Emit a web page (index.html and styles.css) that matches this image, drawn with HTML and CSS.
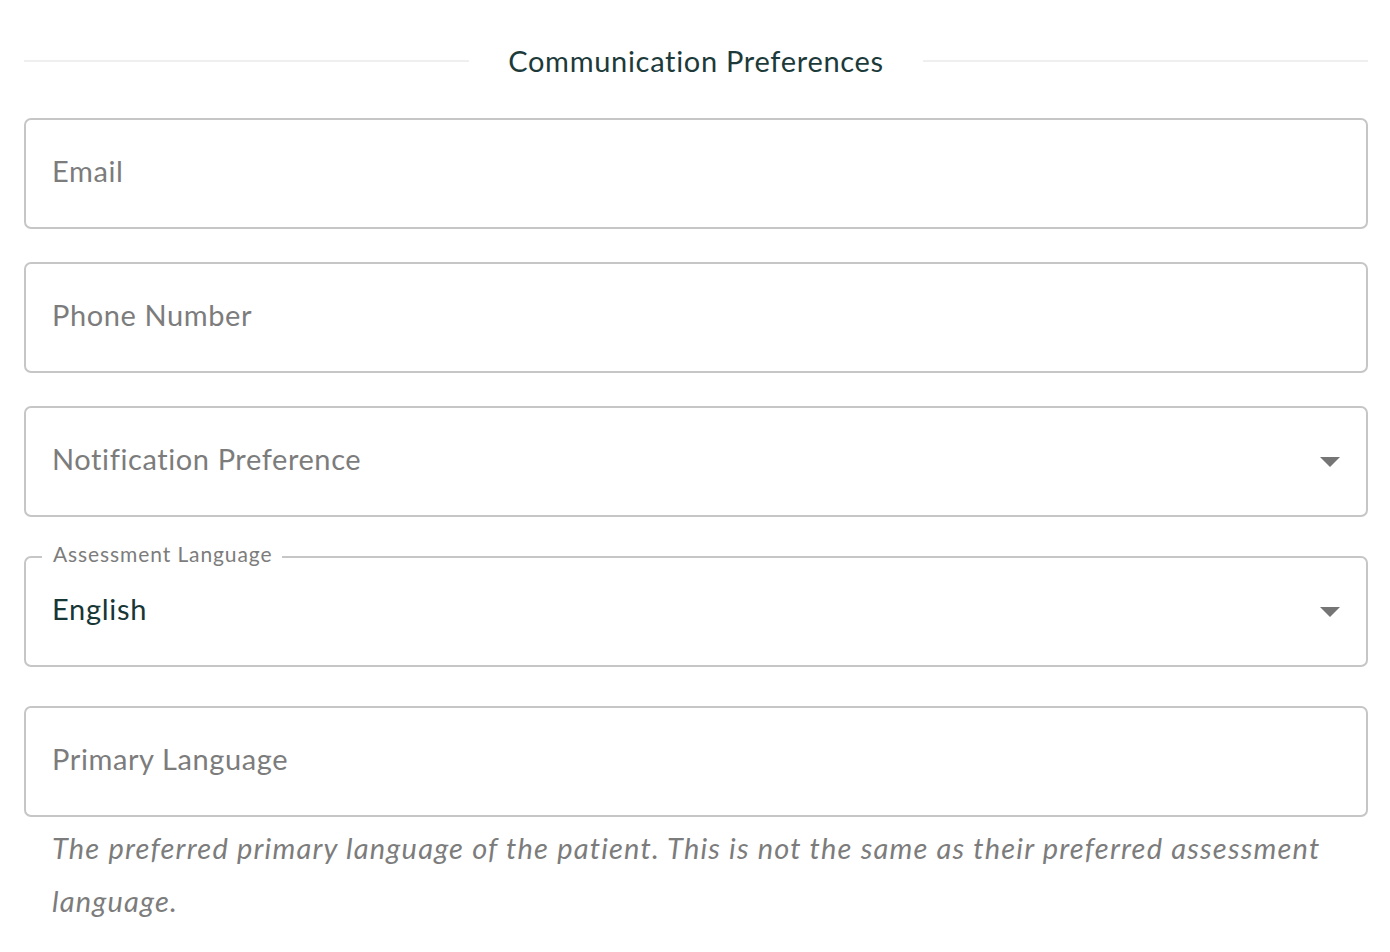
FILE: index.html
```html
<!DOCTYPE html>
<html lang="en">
<head>
<meta charset="utf-8">
<title>Communication Preferences</title>
<link rel="stylesheet" href="styles.css">
</head>
<body>
<main class="page">
  <div class="section-head">
    <span class="rule"></span>
    <h2 class="section-title">Communication Preferences</h2>
    <span class="rule"></span>
  </div>

  <div class="field">
    <div class="box"><span class="placeholder">Email</span></div>
  </div>

  <div class="field">
    <div class="box"><span class="placeholder">Phone Number</span></div>
  </div>

  <div class="field">
    <div class="box select">
      <span class="placeholder">Notification Preference</span>
      <svg class="caret" width="20" height="10" viewBox="0 0 20 10"><path d="M0 0 L20 0 L10 10 Z" fill="#757575"/></svg>
    </div>
  </div>

  <div class="field field-labeled">
    <div class="box select">
      <span class="float-label">Assessment Language</span>
      <span class="value">English</span>
      <svg class="caret" width="20" height="10" viewBox="0 0 20 10"><path d="M0 0 L20 0 L10 10 Z" fill="#757575"/></svg>
    </div>
  </div>

  <div class="field field-labeled">
    <div class="box"><span class="placeholder">Primary Language</span></div>
    <p class="helper">The preferred primary language of the patient. This is not the same as their preferred assessment language.</p>
  </div>
</main>
</body>
</html>
```

FILE: styles.css
```css
html, body {
  margin: 0;
  padding: 0;
  background: #ffffff;
}

body {
  font-family: Lato, "Open Sans", "Liberation Sans", sans-serif;
}

.page {
  padding: 0 22px 0 24px;
  display: flex;
  flex-direction: column;
}

.section-head {
  display: flex;
  align-items: center;
  height: 50px;
  margin-top: 36px;
  margin-bottom: 32px;
}

.rule {
  flex: 1;
  height: 2px;
  background: #efefef;
}

.section-title {
  margin: 0 39px;
  font-size: 29px;
  font-weight: 400;
  letter-spacing: 0.7px;
  color: #1c3a3a;
  line-height: 50px;
  white-space: nowrap;
}

.field {
  margin-bottom: 33px;
}

.field-labeled {
  margin-top: 6px;
}

.box {
  position: relative;
  box-sizing: border-box;
  height: 111px;
  border: 2px solid #c6c6c6;
  border-radius: 7px;
  display: flex;
  align-items: center;
  padding: 0 26px 6px 26px;
}

.placeholder {
  font-size: 29px;
  letter-spacing: 0.6px;
  color: #7c7c7c;
  flex: 1;
}

.value {
  font-size: 29px;
  letter-spacing: 0.7px;
  color: #173636;
  flex: 1;
}

.caret {
  flex: none;
  margin-top: 6px;
}

.float-label {
  position: absolute;
  left: 16px;
  top: -18px;
  padding: 0 10px 0 11px;
  background: #ffffff;
  font-size: 21px;
  letter-spacing: 0.9px;
  line-height: 28px;
  color: #7c7c7c;
}

.helper {
  margin: 4px 0 0;
  padding: 0 28px 0 28px;
  font-size: 29px;
  font-style: italic;
  letter-spacing: 1.2px;
  line-height: 53px;
  color: #7c7c7c;
}
```
